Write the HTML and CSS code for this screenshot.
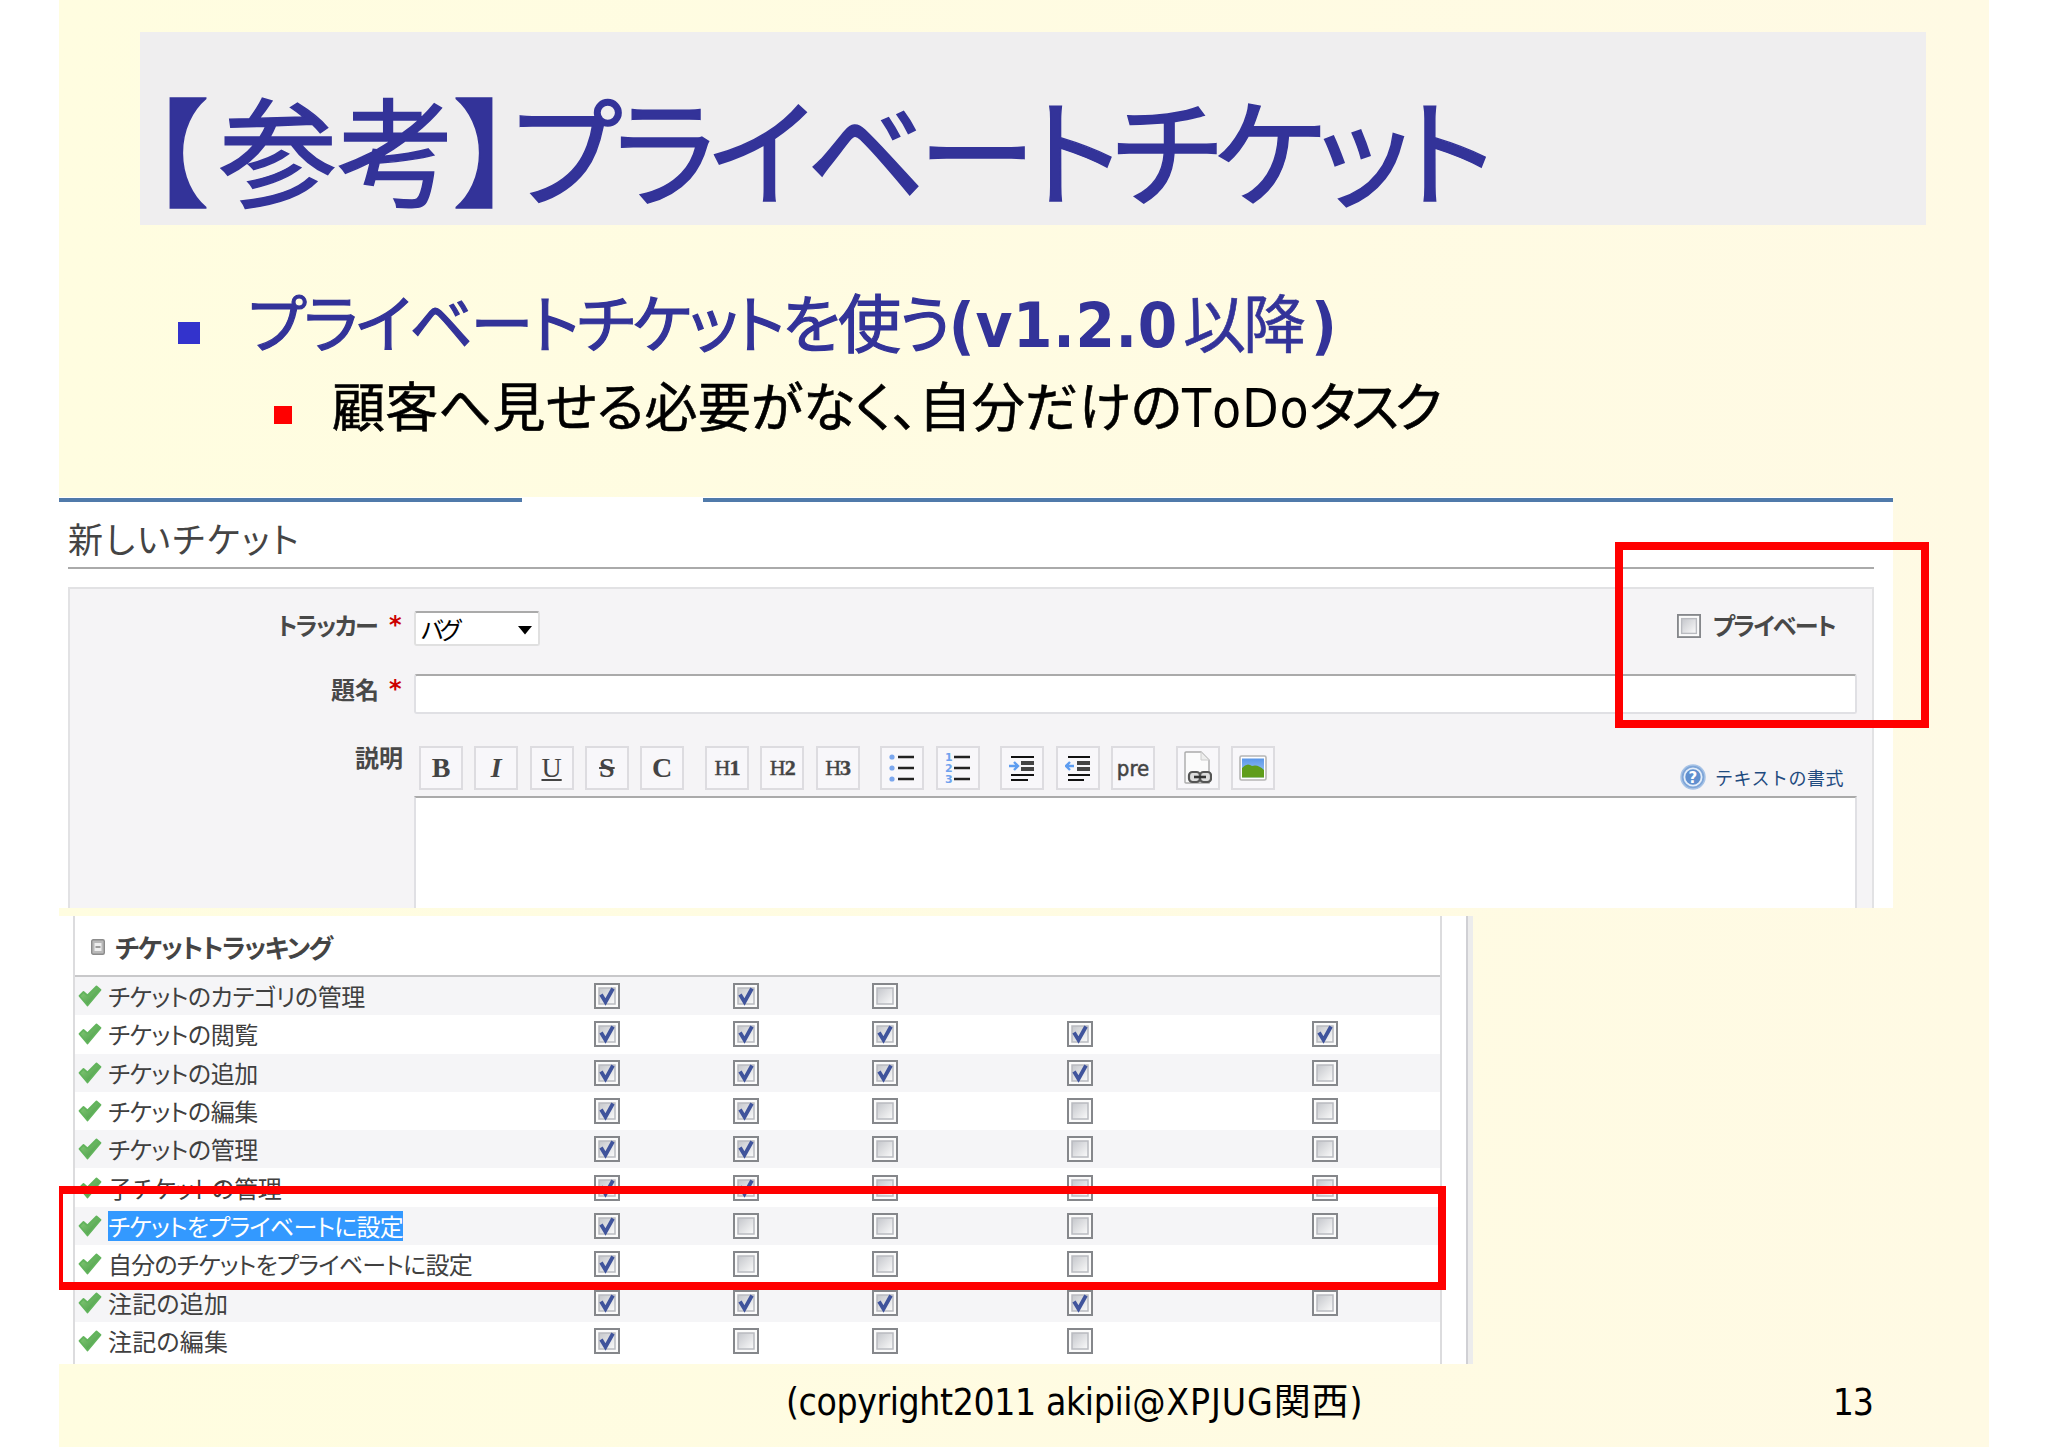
FILE: index.html
```html
<!DOCTYPE html>
<html lang="ja">
<head>
  <meta charset="UTF-8" />
  <title>【参考】プライベートチケット</title>
  <link rel="stylesheet" href="styles.css">
</head>
<body>

  <!-- チェックボックスとアイコンの定義 -->
  <svg class="defs" width="0" height="0">
    <defs>
      <linearGradient id="boxFill" x1="0" y1="0" x2="1" y2="1">
        <stop offset="0" stop-color="#c4c6cb"/>
        <stop offset="1" stop-color="#fbfbfb"/>
      </linearGradient>
      <linearGradient id="tickFill" x1="0" y1="0" x2="1" y2="1">
        <stop offset="0" stop-color="#8ed07e"/>
        <stop offset="1" stop-color="#3f9440"/>
      </linearGradient>
      <linearGradient id="sky" x1="0" y1="0" x2="0" y2="1">
        <stop offset="0" stop-color="#5b97e8"/>
        <stop offset="1" stop-color="#a9cdf6"/>
      </linearGradient>
      <symbol id="off" viewBox="0 0 26 26">
        <rect x="1" y="1" width="24" height="24" fill="#fbfbfb" stroke="#85878b" stroke-width="2"/>
        <rect x="5" y="5" width="16" height="16" fill="url(#boxFill)" stroke="#b9bbc0" stroke-width="1.5"/>
      </symbol>
      <symbol id="on" viewBox="0 0 26 26">
        <use href="#off"/>
        <path d="M7 11.5 L11.5 19 L19 5.5" fill="none" stroke="#40549c" stroke-width="3.8"/>
      </symbol>
      <symbol id="tick" viewBox="0 0 24 22">
        <path d="M1.5 11 L5.5 7 L9.5 10.5 L18.5 1.5 L22.5 5 L9.5 20.5 Z" fill="url(#tickFill)" stroke="#62b45c" stroke-width="1.8" stroke-linejoin="round"/>
      </symbol>
    </defs>
  </svg>

  <div class="slide">
    <header class="title-band">
      <h1><span class="open">【</span><span>参考】</span><span class="kana">プライベートチケット</span></h1>
    </header>

    <ul class="points">
      <li class="point"><i class="dot"></i><span class="p-text">プライベートチケットを使う</span><b>(v1.2.0</b><span class="p-since">以降</span><b>)</b></li>
      <li class="subpoint"><i class="dot"></i><span class="s-text">顧客へ見せる必要がなく、自分だけの</span><span class="s-todo">ToDo</span><span class="s-task">タスク</span></li>
    </ul>

    <!-- 新しいチケット -->
    <section class="ticket">
      <div class="tabline"><i></i><i></i></div>
      <h2>新しいチケット</h2>
      <div class="form">
        <div class="row tracker">
          <label><span class="tracker-name">トラッカー</span><em>*</em></label>
          <div class="select"><span>バグ</span><svg width="14" height="9"><path d="M0 0H14L7 8.5Z"/></svg></div>
          <div class="private"><svg width="24" height="24"><use href="#off"/></svg><span>プライベート</span></div>
        </div>
        <div class="row subject">
          <label><span>題名</span><em>*</em></label>
          <div class="input"></div>
        </div>
        <div class="row desc">
          <label><span>説明</span></label>
          <div class="editor">
            <div class="toolbar">
              <button><b>B</b></button>
              <button><b><i>I</i></b></button>
              <button><u>U</u></button>
              <button><b><s>S</s></b></button>
              <button><b>C</b></button>
              <button class="gap h">H<b>1</b></button>
              <button class="h">H<b>2</b></button>
              <button class="h">H<b>3</b></button>
              <button class="gap">
                <svg width="26" height="32" viewBox="0 0 26 32"><g fill="#7ba7ee"><circle cx="3" cy="5" r="2.6"/><circle cx="3" cy="16" r="2.6"/><circle cx="3" cy="27" r="2.6"/></g><path d="M9 5H25M9 16H25M9 27H25" stroke="#222" stroke-width="2.4"/></svg>
              </button>
              <button>
                <svg width="26" height="36" viewBox="0 -2 26 36"><g class="nums"><text x="0" y="9">1</text><text x="0" y="20">2</text><text x="0" y="31">3</text></g><path d="M9 5H25M9 16H25M9 27H25" stroke="#222" stroke-width="2.4"/></svg>
              </button>
              <button class="gap">
                <svg width="26" height="26" viewBox="0 0 26 26"><path d="M2 2H25M2 20H25M2 25H19" stroke="#111" stroke-width="2.2"/><path d="M12 8H25M12 14H25" stroke="#444" stroke-width="4"/><path d="M0 11H8M5 7L9 11L5 15" fill="none" stroke="#5d9cf0" stroke-width="2.4"/></svg>
              </button>
              <button>
                <svg width="26" height="26" viewBox="0 0 26 26"><path d="M3 2H25M3 20H25M3 25H19" stroke="#111" stroke-width="2.2"/><path d="M12 8H25M12 14H25" stroke="#444" stroke-width="4"/><path d="M1 11H9M5 7L1 11L5 15" fill="none" stroke="#5d9cf0" stroke-width="2.4"/></svg>
              </button>
              <button class="pre">pre</button>
              <button class="gap">
                <svg width="28" height="34" viewBox="0 0 28 34"><path d="M1 2Q1 1 2 1H17L25 9V32H2Q1 32 1 31Z" fill="#fbfbfb" stroke="#aaa" stroke-width="1.4"/><path d="M17 1V9H25" fill="#eee" stroke="#ccc"/><rect x="5" y="21" width="11" height="10" rx="3.5" fill="#ddd" stroke="#555" stroke-width="2.2"/><rect x="16" y="21" width="11" height="10" rx="3.5" fill="#ddd" stroke="#555" stroke-width="2.2"/><path d="M10 26H22" stroke="#333" stroke-width="2.6"/></svg>
              </button>
              <button>
                <svg width="28" height="26" viewBox="0 0 28 26"><rect x="1" y="1" width="26" height="24" rx="1.5" fill="#fff" stroke="#b5b5b5" stroke-width="1.6"/><rect x="3" y="3.5" width="22" height="19" fill="url(#sky)"/><path d="M3 13Q8 7 13 11Q19 9 25 15V22.5H3Z" fill="#5f9d1b"/></svg>
              </button>
              <a class="help">
                <svg width="26" height="26" viewBox="0 0 26 26"><circle cx="13" cy="13" r="12" fill="#7fa6d8" stroke="#a7c3e6" stroke-width="1.5"/><circle cx="13" cy="13" r="8.6" fill="#5f8fcf" stroke="#e4eefa" stroke-width="1.8"/><text x="13" y="18.5" text-anchor="middle">?</text></svg>
                <span>テキストの書式</span>
              </a>
            </div>
            <div class="textarea"></div>
          </div>
        </div>
      </div>
    </section>

    <!-- 権限レポート -->
    <section class="perms">
      <div class="table">
        <h3><svg width="14" height="16" viewBox="0 0 14 16"><rect x=".7" y=".7" width="12.6" height="14.6" rx="1.5" fill="#b9b9b9" stroke="#8b8b8b" stroke-width="1.4"/><rect x="3.5" y="4" width="7" height="8" fill="#eee"/><path d="M4.5 8H9.5" stroke="#888" stroke-width="1.6"/></svg><span>チケットトラッキング</span></h3>
        <div id="rows"></div>
      </div>
      <div class="edge"></div>
    </section>

    <footer class="foot">
      <span class="copy"><span class="event">(copyright2011 akipii</span><span class="group">@XPJUG関西)</span></span>
      <span class="page">13</span>
    </footer>

    <div class="mark mark-private"></div>
    <div class="mark mark-rows"></div>
  </div>

  <script>
    // 1 = チェックあり, 0 = チェックなし, - = 対象外
    const perms = [
      ['チケットのカテゴリの管理', '110--'],
      ['チケットの閲覧', '11111'],
      ['チケットの追加', '11110'],
      ['チケットの編集', '11000'],
      ['チケットの管理', '11000'],
      ['子チケットの管理', '11000'],
      ['チケットをプライベートに設定', '10000', 'tight selected'],
      ['自分のチケットをプライベートに設定', '1000-', 'tight'],
      ['注記の追加', '11110', 'plain'],
      ['注記の編集', '1000-', 'plain']
    ];

    document.getElementById('rows').innerHTML = perms.map(([name, boxes, cls]) => `
      <div class="perm">
        <div class="name"><svg width="24" height="22"><use href="#tick"/></svg><span class="${cls || ''}">${name}</span></div>
        ${[...boxes].map(b => `<div class="cell">${b === '-' ? '' : `<svg width="26" height="26"><use href="#${b === '1' ? 'on' : 'off'}"/></svg>`}</div>`).join('')}
      </div>`).join('');
  </script>

</body>
</html>
```

FILE: styles.css
```css
* {
  box-sizing: border-box;
}

body {
  margin: 0;
  background: #fff;
  font-family: "Noto Sans CJK JP", sans-serif;
  font-feature-settings: "palt";
  overflow: hidden;
}

h1, h2, h3, ul {
  margin: 0;
  padding: 0;
  font-weight: normal;
  list-style: none;
}

svg {
  display: block;
  flex: none;
}

span {
  white-space: nowrap;
}

.defs {
  position: absolute;
}

.slide {
  position: relative;
  display: flex;
  flex-direction: column;
  width: 1930px;
  height: 1447px;
  margin-left: 59px;
  background: linear-gradient(to right, #fffde0, #fffae4);
}

/* タイトル */
.title-band {
  height: 193px;
  margin: 32px 63px 0 81px;
  padding: 27px 0 0 8px;
  background: #efeeef;
}

h1 {
  display: flex;
  color: #333399;
  font-size: 118px;
  line-height: 176px;
  -webkit-text-stroke: 1.5px #333399;
}

.open {
  letter-spacing: 12px;
}

.kana {
  margin-left: -2px;
  letter-spacing: -6.9px;
}

.points {
  height: 272px;
  padding: 50px 0 0 119px;
}

.point, .subpoint {
  display: flex;
  align-items: baseline;
}

.point {
  height: 91px;
  color: #333399;
  font-size: 63px;
  line-height: 90px;
}

.dot {
  position: relative;
  top: -3px;
}

.point .dot {
  width: 22px;
  height: 22px;
  margin-right: 48px;
  background: #3333cc;
}

.point b, .s-todo, .foot {
  font-family: "DejaVu Sans Condensed", "DejaVu Sans", "Noto Sans CJK JP", sans-serif;
  font-stretch: condensed;
}

.point b {
  letter-spacing: .7px;
}

.p-text {
  letter-spacing: -2.3px;
  -webkit-text-stroke: 1.2px #333399;
}

.p-since {
  margin: 0 8px 0 5px;
  letter-spacing: -3px;
  -webkit-text-stroke: .6px #333399;
}

.subpoint {
  padding-left: 96px;
  font-size: 53px;
  line-height: 76px;
}

.subpoint .dot {
  width: 18px;
  height: 18px;
  margin-right: 40px;
  background: #f00;
}

.s-text {
  letter-spacing: .2px;
  -webkit-text-stroke: .6px #000;
}

.s-todo {
  font-kerning: none;
  letter-spacing: .8px;
}

.s-task {
  letter-spacing: -4.5px;
  -webkit-text-stroke: .6px #000;
}

/* 新しいチケット */
.ticket {
  width: 1834px;
  height: 411px;
  padding: 0 19px 0 9px;
  background: #fff;
  overflow: hidden;
}

.tabline {
  display: flex;
  justify-content: space-between;
  height: 5px;
  margin: 0 -19px 0 -9px;
  padding-top: 1px;
}

.tabline i {
  width: 463px;
  background: #507aaa;
}

.tabline i + i {
  width: 1190px;
}

h2 {
  height: 67px;
  border-bottom: 2px solid #aaa;
  color: #444;
  font-size: 35px;
  letter-spacing: 2.3px;
  line-height: 72px;
}

.form {
  height: 340px;
  margin-top: 18px;
  padding: 22px 15px 0 0;
  border: 2px solid #e2e2e4;
  background: #f5f4f6;
}

.row {
  display: flex;
}

label {
  display: flex;
  justify-content: flex-end;
  width: 344px;
  height: 30px;
  padding-right: 13px;
  color: #484848;
  font-size: 24px;
  font-weight: bold;
  line-height: 30px;
}

label em {
  width: 12px;
  margin-left: 10px;
  color: #c00;
  font-family: "DejaVu Sans", sans-serif;
  font-style: normal;
}

.tracker {
  height: 63px;
}

.tracker label {
  line-height: 28px;
}

.tracker-name {
  margin-right: 2px;
  letter-spacing: -1.6px;
}

.select {
  display: flex;
  justify-content: space-between;
  align-items: center;
  width: 126px;
  height: 35px;
  padding: 0 6px 0 5px;
  border: 2px solid #e0e0e0;
  border-top-color: #aaa;
  border-radius: 3px;
  background: #fff;
  color: #000;
  font-size: 24px;
  letter-spacing: -4px;
  line-height: 30px;
}

.select svg {
  margin-top: 4px;
}

.private {
  display: flex;
  gap: 12px;
  height: 24px;
  margin: 3px 0 0 auto;
  padding-right: 22px;
  color: #484848;
  font-size: 24px;
  font-weight: bold;
  letter-spacing: -1.7px;
  line-height: 22px;
}

.subject {
  height: 72px;
}

.input {
  flex: 1;
  height: 40px;
  border: 2px solid #e0e0e4;
  border-top-color: #aaa;
  border-radius: 3px;
  background: #fff;
}

.desc label {
  padding-right: 11px;
  line-height: 22px;
}

.editor {
  flex: 1;
}

.toolbar {
  display: flex;
  gap: 11.3px;
  height: 50px;
  padding-left: 5px;
}

button {
  display: flex;
  justify-content: center;
  align-items: center;
  width: 44px;
  height: 44px;
  padding: 0;
  border: 2px solid #dddce0;
  background: #f8f7fa;
  color: #444;
  font: 28px "Liberation Serif", serif;
}

button.gap {
  margin-left: 9.5px;
}

button.h {
  font-size: 22px;
  letter-spacing: -1px;
  -webkit-text-stroke: .4px #444;
}

button.pre {
  font: 22px "DejaVu Sans Condensed", "DejaVu Sans", sans-serif;
  -webkit-text-stroke: .5px #444;
}

.nums {
  fill: #6fa2ee;
  font: bold 11px "DejaVu Sans", sans-serif;
}

.help {
  display: flex;
  gap: 9px;
  height: 26px;
  margin: 18px 13px 0 auto;
  color: #1f4b7f;
  font-size: 18px;
  font-feature-settings: normal;
  letter-spacing: .5px;
  line-height: 26px;
}

.help text {
  fill: #fff;
  font: bold 15px "DejaVu Sans", sans-serif;
}

.textarea {
  height: 130px;
  border: 2px solid #e0e0e4;
  border-top-color: #aaa;
  background: #fff;
}

/* 権限レポート */
.perms {
  display: flex;
  width: 1414px;
  height: 448px;
  margin-top: 8px;
  padding-left: 14px;
  background: #fff;
}

.table {
  width: 1369px;
  border: solid #dcdcde;
  border-width: 0 2px;
}

.edge {
  width: 7px;
  margin-left: auto;
  border-left: 2px solid #d0d0d4;
  background: #ececec;
}

h3 {
  display: flex;
  align-items: center;
  gap: 10px;
  height: 61px;
  padding: 2px 0 0 16px;
  border-bottom: 2px solid #c8c8ca;
  color: #444;
  font-size: 26px;
  font-weight: bold;
  letter-spacing: -1.5px;
}

.perm {
  display: grid;
  grid-template-columns: 463px 138px 140px 138px 252px 1fr;
  height: 38.3px;
}

.perm:nth-child(odd) {
  background: #f5f5f7;
}

.name {
  display: flex;
  align-items: center;
  gap: 6px;
  padding-left: 3px;
  color: #404040;
  font-size: 24px;
  letter-spacing: -.45px;
  line-height: 30px;
}

.tight {
  letter-spacing: -.75px;
}

.plain {
  letter-spacing: .2px;
}

.selected {
  background: #3399ff;
  color: #fff;
}

.cell {
  display: flex;
  justify-content: center;
  align-items: center;
}

.cell:last-child {
  padding-left: 3px;
}

/* フッター */
.foot {
  display: flex;
  height: 83px;
  padding: 14px 116px 0 727px;
  font-size: 37px;
  line-height: 50px;
}

.copy {
  display: flex;
}

.event {
  letter-spacing: -.4px;
}

.group {
  letter-spacing: .9px;
}

.page {
  margin-left: auto;
  letter-spacing: -1px;
}

/* 赤枠 */
.mark {
  position: absolute;
  border: 8px solid #f00;
}

.mark-private {
  left: 1556px;
  top: 542px;
  width: 314px;
  height: 186px;
}

.mark-rows {
  left: 0;
  top: 1186px;
  width: 1387px;
  height: 104px;
  border-left-width: 4px;
}
```
